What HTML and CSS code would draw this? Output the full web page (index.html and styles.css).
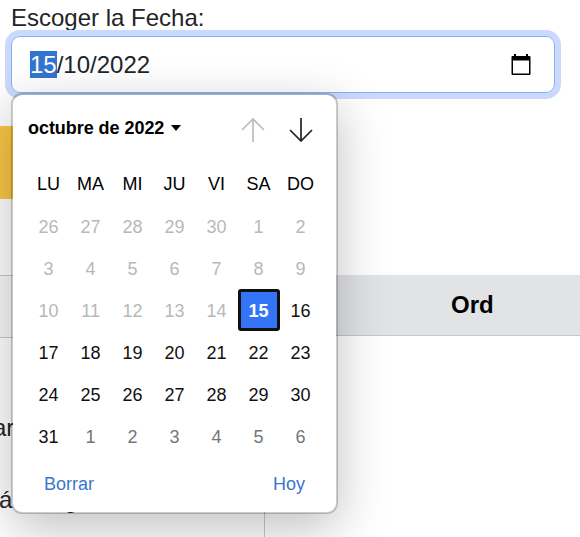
FILE: index.html
```html
<!DOCTYPE html>
<html lang="es">
<head>
<meta charset="utf-8">
<title>Escoger la Fecha</title>
<link rel="stylesheet" href="styles.css">
</head>
<body>
<main class="page">
  <label class="label">Escoger la Fecha:</label>
  <div class="field">
    <span class="date"><span class="selected-part">15</span>/10/2022</span>
    <svg class="calendar-icon" viewBox="0 0 20 22"><path fill="#000" fill-rule="evenodd" d="M3 0h2v2h10V0h2v2h1.5q1 0 1 1v17q0 1-1 1h-17q-1 0-1-1V3q0-1 1-1H3zM2 6.5v13h16v-13z"/></svg>
  </div>
  <div class="action"></div>
  <section class="table">
    <div class="head-left"></div>
    <div class="head-right">Ord</div>
    <div class="cell-left"><p>ar</p><p class="second"><span>á</span><span>g</span></p></div>
    <div class="cell-right"></div>
  </section>
</main>
<div class="picker">
  <header class="picker-head">
    <span class="month">octubre de 2022</span>
    <svg class="caret" viewBox="0 0 10 6"><path d="M0 0h10L5 6z"/></svg>
    <svg class="arrow up" viewBox="0 0 24 24"><path d="M12 24V1M1 12 12 1l11 11"/></svg>
    <svg class="arrow" viewBox="0 0 24 24"><path d="M12 0v23M1 12l11 11 11-11"/></svg>
  </header>
  <div class="week names"><span>LU</span><span>MA</span><span>MI</span><span>JU</span><span>VI</span><span>SA</span><span>DO</span></div>
  <div class="week off"><span>26</span><span>27</span><span>28</span><span>29</span><span>30</span><span>1</span><span>2</span></div>
  <div class="week off"><span>3</span><span>4</span><span>5</span><span>6</span><span>7</span><span>8</span><span>9</span></div>
  <div class="week off"><span>10</span><span>11</span><span>12</span><span>13</span><span>14</span><span class="today">15</span><span class="on">16</span></div>
  <div class="week"><span>17</span><span>18</span><span>19</span><span>20</span><span>21</span><span>22</span><span>23</span></div>
  <div class="week"><span>24</span><span>25</span><span>26</span><span>27</span><span>28</span><span>29</span><span>30</span></div>
  <div class="week next"><span class="on">31</span><span>1</span><span>2</span><span>3</span><span>4</span><span>5</span><span>6</span></div>
  <footer class="picker-foot"><span>Borrar</span><span>Hoy</span></footer>
</div>
</body>
</html>
```

FILE: styles.css
```css
* { box-sizing: border-box; }
body {
  margin: 0;
  height: 537px;
  overflow: hidden;
  position: relative;
  background: #fff;
  color: #212529;
  font-family: "Liberation Sans", Arial, sans-serif;
  font-size: 24px;
}
.page { display: flex; flex-direction: column; height: 537px; }
.label { height: 36px; padding-left: 11px; line-height: 36px; }
.field {
  display: flex;
  align-items: center;
  justify-content: space-between;
  width: 544px;
  height: 57px;
  flex: none;
  margin-left: 11px;
  padding: 0 23px 0 18px;
  border: 1px solid #86b0f5;
  border-radius: 9px;
  box-shadow: 0 0 0 6px #cad9fc;
}
.date { line-height: 27px; }
.selected-part { display: inline-block; background: #3275d0; color: #fff; }
.calendar-icon { width: 20px; height: 22px; }
.action { width: 100px; height: 73px; flex: none; margin-top: 33px; background: #fac745; }
.table {
  display: grid;
  grid-template-columns: 265px 1fr;
  grid-template-rows: 62px 1fr;
  flex: 1;
  margin-top: 76px;
}
.head-left { border-top: 1px solid #c8c9ca; border-bottom: 1px solid #c8c9ca; height: 63px; background: #f8f8f8; }
.head-right {
  height: 61px;
  padding-left: 186px;
  background: #e2e3e5;
  border-bottom: 1px solid #c5c6c8;
  color: #000;
  font-weight: bold;
  line-height: 60px;
}
.cell-left { overflow: hidden; padding-top: 73px; border-right: 1px solid #c8c9ca; }
.cell-left p { margin: 0 0 0 -7px; line-height: 36px; }
.cell-left .second { display: flex; gap: 52px; margin: 36px 0 0 -1px; }
.picker {
  position: absolute;
  left: 11px;
  top: 93px;
  width: 327px;
  height: 421px;
  padding: 0 13px 0 14px;
  border: 2px solid rgba(0, 0, 0, 0.2);
  border-radius: 11px;
  background: #fff;
  background-clip: padding-box;
  box-shadow: 0 14px 50px rgba(0, 0, 0, 0.25);
  color: #101010;
  font-size: 18px;
}
.picker-head { display: flex; align-items: center; height: 68px; padding: 0 10px 2px 1px; color: #000; }
.month { font-weight: bold; letter-spacing: -0.05px; }
.caret { width: 10px; height: 6px; margin-left: 7px; }
.arrow { width: 24px; height: 24px; margin-left: 24px; margin-top: 4px; fill: none; stroke: #222; stroke-width: 1.7; }
.arrow.up { margin-left: auto; stroke: #bcbcbc; }
.week { display: grid; grid-template-columns: repeat(7, 42px); height: 42px; margin-left: 0.6px; line-height: 42px; text-align: center; }
.names { height: 43px; color: #000; }
.off { color: #b8b8b8; }
.next { color: #757575; }
.on { color: #101010; }
.today { height: 42px; margin-top: -1px; border: 3px solid #101010; border-radius: 3px; background: #3375f6; color: #fff; font-weight: bold; line-height: 38px; }
.picker-foot { display: flex; justify-content: space-between; padding: 5px 18px 0 17px; line-height: 42px; color: #3b75cf; }
```
